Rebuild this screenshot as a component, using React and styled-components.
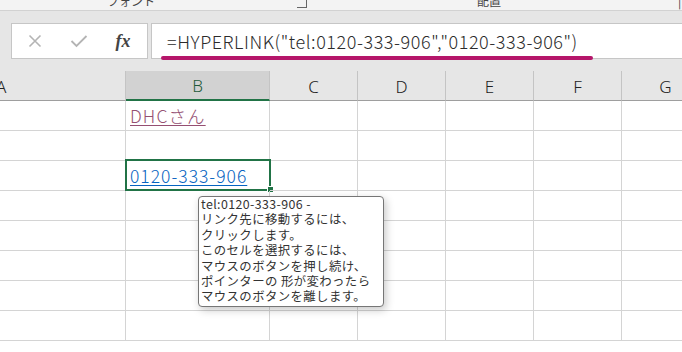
import React from "react";
import styled, { createGlobalStyle } from "styled-components";

const Global = createGlobalStyle`
  html, body { margin: 0; padding: 0; background: #ffffff; overflow: hidden; }
  body { font-family: "Noto Sans CJK JP", "Noto Sans", sans-serif; }
`;

const Page = styled.div`
  width: 682px;
  height: 352px;
  overflow: hidden;
  position: relative;
  background: #ffffff;
`;

const Ribbon = styled.div`
  height: 10px;
  background: #f3f3f3;
  border-bottom: 1px solid #d2d2d2;
  display: flex;
  align-items: flex-end;
  overflow: hidden;
`;

const RibbonLabel = styled.span`
  font-size: 12px;
  line-height: 12px;
  color: #444;
  margin-left: ${(p) => p.$ml}px;
  margin-bottom: 3px;
  white-space: nowrap;
`;

const Launcher = styled.span`
  margin-left: ${(p) => p.$ml}px;
  margin-bottom: 2px;
  width: 9px;
  height: 9px;
  border-right: 1px solid #666;
  border-bottom: 1px solid #666;
`;

const FormulaArea = styled.div`
  height: 60px;
  background: #e6e6e6;
  display: flex;
  align-items: flex-start;
  padding: 12px 0 0 11px;
  box-sizing: border-box;
  gap: 3px;
`;

const IconBox = styled.div`
  width: 137px;
  height: 36px;
  box-sizing: border-box;
  background: #fff;
  border: 1px solid #c6c6c6;
  display: flex;
  align-items: center;
  padding-left: 16px;
`;

const IconSlot = styled.div`
  width: ${(p) => p.$w}px;
  margin-left: ${(p) => p.$ml || 0}px;
  display: flex;
  justify-content: center;
  align-items: center;
`;

const Fx = styled.span`
  font-family: "Liberation Serif", "DejaVu Serif", serif;
  font-style: italic;
  font-weight: bold;
  font-size: 18px;
  color: #444;
  line-height: 1;
`;

const FormulaInput = styled.div`
  position: relative;
  flex: 1;
  height: 36px;
  box-sizing: border-box;
  background: #fff;
  border: 1px solid #c6c6c6;
  border-right: none;
  display: flex;
  align-items: center;
  padding-left: 15px;
  font-size: 18px;
  font-weight: 300;
  letter-spacing: 0.56px;
  color: #2b2b2b;
  white-space: nowrap;
`;

const Underline = styled.div`
  position: absolute;
  left: 9px;
  top: 32px;
  width: 432px;
  height: 4px;
  border-radius: 2px;
  background: #b5166a;
`;

const Grid = styled.div`
  display: grid;
  grid-template-columns: 126px 144px 88px 88px 88px 88px 88px;
  width: 710px;
`;

const HeaderCell = styled.div`
  height: 30px;
  box-sizing: border-box;
  background: ${(p) => (p.$sel ? "#d2d2d2" : "#e6e6e6")};
  border-right: 1px solid #c4c4c4;
  border-bottom: ${(p) => (p.$sel ? "2px solid #217346" : "1px solid #9e9e9e")};
  display: flex;
  align-items: center;
  justify-content: ${(p) => (p.$start ? "flex-start" : "center")};
  font-family: "Noto Sans", "Liberation Sans", sans-serif;
  font-size: 17px;
  font-weight: 300;
  color: ${(p) => (p.$sel ? "#1f5a3a" : "#222")};
  padding-top: 1px;
`;

const HeaderLetter = styled.span`
  margin-left: ${(p) => p.$ml || 0}px;
`;

const Cell = styled.div`
  position: relative;
  height: 30px;
  box-sizing: border-box;
  border-right: 1px solid #d4d4d4;
  border-bottom: 1px solid #d4d4d4;
  display: flex;
  align-items: center;
  padding-left: 4px;
  white-space: nowrap;
`;

const Link = styled.span`
  color: ${(p) => (p.$visited ? "#954f72" : "#0563c1")};
  text-decoration: underline;
  text-decoration-thickness: 1px;
  text-underline-offset: 2px;
  font-size: 17.5px;
  font-weight: 300;
  letter-spacing: ${(p) => p.$ls || 0}px;
`;

const Selection = styled.div`
  position: absolute;
  left: -1px;
  top: -2px;
  right: -2px;
  bottom: -1px;
  border: 2px solid #217346;
  pointer-events: none;
`;

const FillHandle = styled.div`
  position: absolute;
  right: -5px;
  bottom: -4px;
  width: 5px;
  height: 5px;
  background: #217346;
  border: 1px solid #fff;
`;

const Tooltip = styled.div`
  position: absolute;
  left: 198px;
  top: 196px;
  width: 186px;
  height: 111px;
  box-sizing: border-box;
  background: #fff;
  border: 1px solid #767676;
  border-radius: 4px;
  box-shadow: 2px 3px 8px rgba(0, 0, 0, 0.22);
  padding: 0 0 0 2px;
  font-family: "Noto Sans CJK JP", sans-serif;
  font-size: 12.4px;
  letter-spacing: 0.4px;
  line-height: 15.4px;
  color: #333;
  white-space: nowrap;
  overflow: hidden;
`;

const TipLine = styled.div``;

const columns = ["A", "B", "C", "D", "E", "F", "G"];

const CrossIcon = () => (
  <svg width="14" height="14" viewBox="0 0 14 14">
    <path d="M1.5 1.5 L12.5 12.5 M12.5 1.5 L1.5 12.5" stroke="#b4b4b4" strokeWidth="1.6" fill="none" />
  </svg>
);

const CheckIcon = () => (
  <svg width="18" height="14" viewBox="0 0 18 14">
    <path d="M1.5 7 L6.5 12 L16.5 2" stroke="#b4b4b4" strokeWidth="1.8" fill="none" />
  </svg>
);

const rowsData = [
  { b: <Link $visited $ls={1.1}>DHCさん</Link> },
  { b: null },
  { b: <Link $ls={1.0}>0120-333-906</Link>, sel: true },
  {},
  {},
  {},
  {},
  {},
];

export default function App() {
  return (
    <Page>
      <Global />
      <Ribbon>
        <RibbonLabel $ml={107}>フォント</RibbonLabel>
        <Launcher $ml={142} />
        <RibbonLabel $ml={170}>配置</RibbonLabel>
        <RibbonLabel $ml={177}>|</RibbonLabel>
      </Ribbon>
      <FormulaArea>
        <IconBox>
          <IconSlot $w={14}><CrossIcon /></IconSlot>
          <IconSlot $w={20} $ml={27}><CheckIcon /></IconSlot>
          <IconSlot $w={20} $ml={24}><Fx>fx</Fx></IconSlot>
        </IconBox>
        <FormulaInput>
          =HYPERLINK("tel:0120-333-906","0120-333-906")
          <Underline />
        </FormulaInput>
      </FormulaArea>
      <Grid>
        {columns.map((c) => (
          <HeaderCell key={c} $sel={c === "B"} $start={c === "A"}>
            <HeaderLetter $ml={c === "A" ? -4 : 0}>{c}</HeaderLetter>
          </HeaderCell>
        ))}
        {rowsData.map((r, ri) =>
          columns.map((c) => (
            <Cell key={`${ri}-${c}`}>
              {c === "B" && r.b}
              {c === "B" && r.sel && (
                <Selection>
                  <FillHandle />
                </Selection>
              )}
            </Cell>
          ))
        )}
      </Grid>
      <Tooltip>
        <TipLine>tel:0120-333-906 -</TipLine>
        <TipLine>リンク先に移動するには、</TipLine>
        <TipLine>クリックします。</TipLine>
        <TipLine>このセルを選択するには、</TipLine>
        <TipLine>マウスのボタンを押し続け、</TipLine>
        <TipLine>ポインターの 形が変わったら</TipLine>
        <TipLine>マウスのボタンを離します。</TipLine>
      </Tooltip>
    </Page>
  );
}
